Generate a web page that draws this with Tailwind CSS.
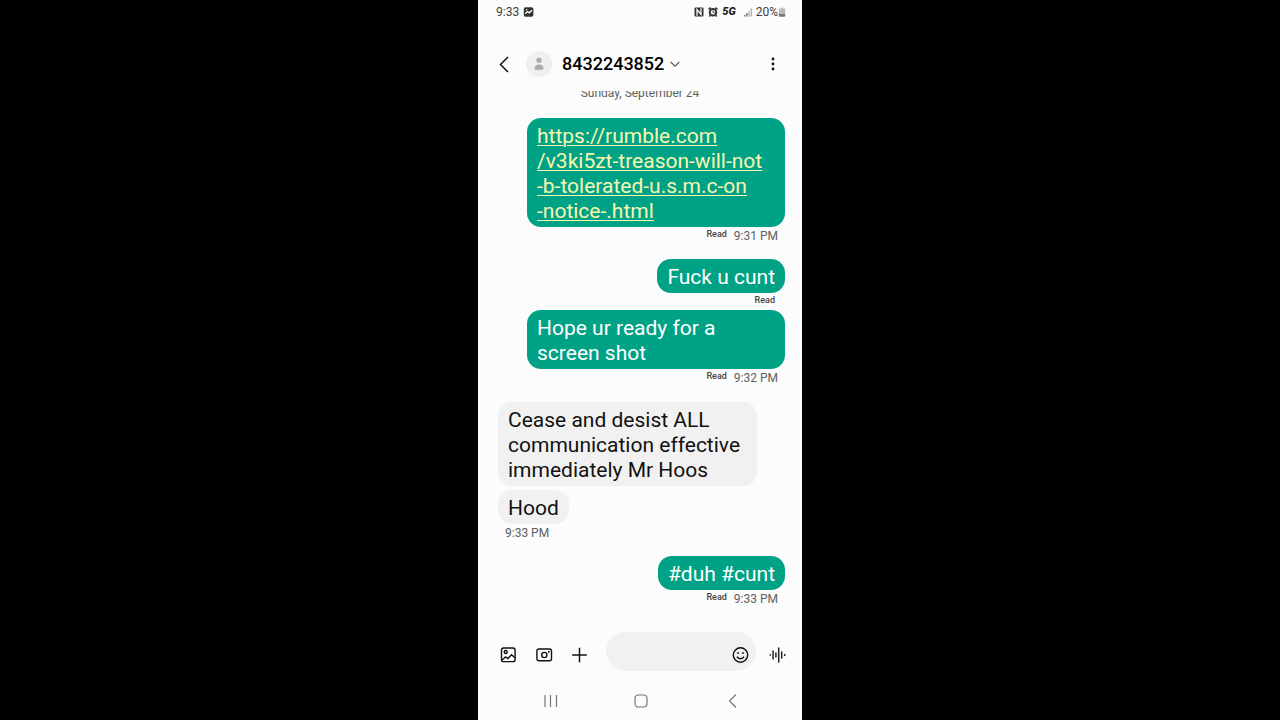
<!DOCTYPE html>
<html lang="en">
<head>
    <meta charset="UTF-8">
    <meta name="viewport" content="width=device-width, initial-scale=1.0">
    <script src="https://cdn.jsdelivr.net/npm/@tailwindcss/browser@4"></script>
    <title>Messages</title>
</head>
<body class="bg-black font-['Roboto',sans-serif] text-black">
    <div class="mx-auto flex h-screen w-full max-w-[324px] flex-col bg-[#fcfcfc]">

        <!-- status bar -->
        <div class="flex h-6 shrink-0 items-center justify-between pl-[18px] pr-4 text-xs text-[#3c3c3c]">
            <div class="flex items-center gap-1">
                <span>9:33</span>
                <svg class="size-3" viewBox="0 0 12 12">
                    <rect x=".8" y="1.2" width="9.600" height="9.600" rx="1.800" fill="#333"/>
                    <path d="M2.200 7.800 4.600 5.600l1.600 1.200L9 4.200" fill="none" stroke="#fff" stroke-width="1.300"/>
                    <circle cx="3.600" cy="3.700" r=".8" fill="#fff"/>
                </svg>
            </div>
            <div class="flex items-center">
                <svg class="mr-1 h-3 w-[10px]" viewBox="0 0 10 12">
                    <rect x=".5" y="1.5" width="9" height="9" rx="1" fill="#333"/>
                    <path d="M3 9.800V3.500l4 5V2.200" fill="none" stroke="#fff" stroke-width="1.300"/>
                </svg>
                <svg class="mr-1 h-3 w-[10px]" viewBox="0 0 10 12" fill="none" stroke="#333">
                    <circle cx="5" cy="6.200" r="3.300" stroke-width="2"/>
                    <path d="M.5 3.300 2.800 1.700M9.500 3.300 7.200 1.700M2.300 9.200 1.200 10.500M7.700 9.200l1.100 1.300" stroke-width="1.500"/>
                    <path d="M5 4.500v2h1.600" stroke-width=".9"/>
                </svg>
                <span class="mr-2 pt-px text-[11px] font-black italic text-[#222]">5G</span>
                <svg class="mr-1 h-3 w-2" viewBox="0 0 8 12">
                    <path d="M0 9h1.500v1.500H0zM2.200 7h1.500v3.500H2.200z" fill="#777"/>
                    <path d="M4.400 5h1.400v5.500H4.400zM6.600 2.500H8v8H6.600z" fill="#b5b5b5"/>
                </svg>
                <span>20%</span>
                <svg class="h-3 w-2" viewBox="0 0 8 12">
                    <path d="M3 1.500h2V2.500h1.500q.7 0 .7.7V8H.8V3.200q0-.7.7-.7H3z" fill="#bbb"/>
                    <path d="M.8 8h6.400v2q0 .7-.7.7h-5q-.7 0-.7-.7z" fill="#777"/>
                </svg>
            </div>
        </div>

        <!-- conversation header -->
        <header class="flex h-[67px] shrink-0 items-center pl-5 pr-5 pt-[13px]">
            <button type="button" aria-label="Back">
                <svg class="h-5 w-3" viewBox="0 0 12 20" fill="none" stroke="#111" stroke-width="1.500">
                    <path d="M10 3 2.500 10.500 10 18"/>
                </svg>
            </button>
            <svg class="ml-4 size-[26px]" viewBox="0 0 26 26">
                <circle cx="13" cy="13" r="13" fill="#efefef"/>
                <circle cx="13" cy="9.300" r="2.600" fill="#ababab"/>
                <path d="M8.500 17.600c0-2.700 1.800-4.100 4.500-4.100s4.500 1.400 4.500 4.100q0 1.200-1.200 1.200H9.700q-1.200 0-1.200-1.200z" fill="#ababab"/>
            </svg>
            <button type="button" class="ml-[10px] flex items-center gap-[6px] text-lg font-medium">
                <h1>8432243852</h1>
                <svg class="h-3 w-[10px]" viewBox="0 0 10 12" fill="none" stroke="#555" stroke-width="1.100">
                    <path d="M.7 4 5 8.200 9.300 4"/>
                </svg>
            </button>
            <button type="button" class="ml-auto" aria-label="More options">
                <svg class="h-4 w-[18px]" viewBox="0 0 18 16" fill="#111">
                    <circle cx="9" cy="3" r="1.400"/>
                    <circle cx="9" cy="8" r="1.400"/>
                    <circle cx="9" cy="13" r="1.400"/>
                </svg>
            </button>
        </header>

        <!-- messages -->
        <main class="flex min-h-0 grow flex-col overflow-hidden px-[17px] text-[21px] leading-[25px]">
            <p class="-mt-[6px] mb-[17px] text-center text-xs leading-4 text-[#606060]">Sunday, September 24</p>

            <div class="w-[258px] self-end rounded-[14px] bg-[#00a286] px-[10px] pb-[3px] pt-[6px]">
                <a href="#" class="text-[#f8f7b0] underline decoration-1 underline-offset-2">https://rumble.com<br>/v3ki5zt-treason-will-not<br>-b-tolerated-u.s.m.c-on<br>-notice-.html</a>
            </div>
            <div class="mb-4 flex h-4 justify-end gap-[7px] pr-[7px] text-xs leading-[18px] text-[#606060]">
                <span class="text-[9px] font-medium leading-[15px] text-[#444]">Read</span>
                <span>9:31 PM</span>
            </div>

            <div class="self-end rounded-[14px] bg-[#00a286] px-[10px] pb-[3px] pt-[6px] text-white">Fuck u cunt</div>
            <div class="flex h-[17px] justify-end pr-[10px]">
                <span class="text-[9px] font-medium leading-[15px] text-[#444]">Read</span>
            </div>

            <div class="w-[258px] self-end rounded-[14px] bg-[#00a286] px-[10px] pb-[3px] pt-[6px] text-white">Hope ur ready for a screen shot</div>
            <div class="mb-[17px] flex h-4 justify-end gap-[7px] pr-[7px] text-xs leading-[18px] text-[#606060]">
                <span class="text-[9px] font-medium leading-[15px] text-[#444]">Read</span>
                <span>9:32 PM</span>
            </div>

            <div class="mb-1 ml-[3px] w-[259px] rounded-[14px] bg-[#f1f1f1] px-[10px] pb-[3px] pt-[6px] text-[#111]">Cease and desist ALL communication effective immediately Mr Hoos</div>
            <div class="ml-[3px] self-start rounded-[14px] bg-[#f1f1f1] px-[10px] pb-[3px] pt-[6px] text-[#111]">Hood</div>
            <div class="mb-4 h-4 pl-[10px] text-xs leading-[18px] text-[#606060]">9:33 PM</div>

            <div class="self-end rounded-[14px] bg-[#00a286] px-[10px] pb-[3px] pt-[6px] text-white">#duh #cunt</div>
            <div class="flex h-4 justify-end gap-[7px] pr-[7px] text-xs leading-[18px] text-[#606060]">
                <span class="text-[9px] font-medium leading-[15px] text-[#444]">Read</span>
                <span>9:33 PM</span>
            </div>
        </main>

        <!-- composer -->
        <form class="flex h-[39px] shrink-0 items-center pl-[22px] pr-4">
            <button type="button" class="mt-[7px]" aria-label="Gallery">
                <svg class="size-[18px]" viewBox="0 0 18 18" fill="none" stroke="#111" stroke-width="1.400">
                    <rect x="1.500" y="2" width="13.600" height="13.600" rx="2.200"/>
                    <circle cx="5.700" cy="6" r="1.500"/>
                    <path d="M2 14l3.600-3 2.300 1.600 3.600-3.800 3.400 3"/>
                </svg>
            </button>
            <button type="button" class="ml-[18px] mt-[7px]" aria-label="Camera">
                <svg class="size-[18px]" viewBox="0 0 18 18" fill="none" stroke="#111" stroke-width="1.400">
                    <rect x=".9" y="3" width="14.600" height="11.800" rx="2"/>
                    <circle cx="8.300" cy="9" r="2.600"/>
                    <path d="M12 5.900h1.600" stroke-width="1.600"/>
                </svg>
            </button>
            <button type="button" class="ml-[17px] mt-[7px]" aria-label="Add">
                <svg class="size-[18px]" viewBox="0 0 18 18" stroke="#111" stroke-width="1.500">
                    <path d="M1.200 9h14.600M8.500 1.700v14.600"/>
                </svg>
            </button>
            <div class="ml-[17px] flex h-full min-w-0 grow items-center rounded-full bg-[#f1f1f1] pl-4 pr-[7px]">
                <input type="text" aria-label="Message" class="min-w-0 grow bg-transparent text-base outline-none">
                <button type="button" class="mt-[7px]" aria-label="Emoji">
                    <svg class="size-[18px]" viewBox="0 0 18 18" fill="none" stroke="#111" stroke-width="1.400">
                        <circle cx="9.500" cy="9" r="7.200"/>
                        <path d="M6 10.600c1.400 2.800 5.600 2.800 7 0"/>
                        <circle cx="7" cy="7" r=".9" fill="#111" stroke="none"/>
                        <circle cx="12" cy="7" r=".9" fill="#111" stroke="none"/>
                    </svg>
                </button>
            </div>
            <button type="button" class="ml-3 mt-[7px]" aria-label="Voice message">
                <svg class="size-[18px]" viewBox="0 0 18 18" stroke="#222" stroke-width="1.500" stroke-linecap="round">
                    <path d="M2.300 8.700v.6M5.100 5v8M7.900 7v4M10.700 2v14M13.700 6v6M16.700 8.500v1"/>
                </svg>
            </button>
        </form>

        <!-- system navigation -->
        <nav class="flex h-[49px] shrink-0 items-center px-[62px] pt-[11px]">
            <button type="button" aria-label="Recent apps">
                <svg class="size-[18px]" viewBox="0 0 18 18" stroke="#777" stroke-width="1.200">
                    <path d="M5 3v12M10.500 3v12M16.500 3v12"/>
                </svg>
            </button>
            <button type="button" class="mx-auto" aria-label="Home">
                <svg class="size-[18px]" viewBox="0 0 18 18" fill="none" stroke="#777" stroke-width="1.200">
                    <rect x="4" y="3" width="12" height="12" rx="3.500"/>
                </svg>
            </button>
            <button type="button" aria-label="Back">
                <svg class="size-[18px]" viewBox="0 0 18 18" fill="none" stroke="#777" stroke-width="1.200">
                    <path d="M14 2.500 7.500 9l6.500 6.500"/>
                </svg>
            </button>
        </nav>
    </div>
</body>
</html>
